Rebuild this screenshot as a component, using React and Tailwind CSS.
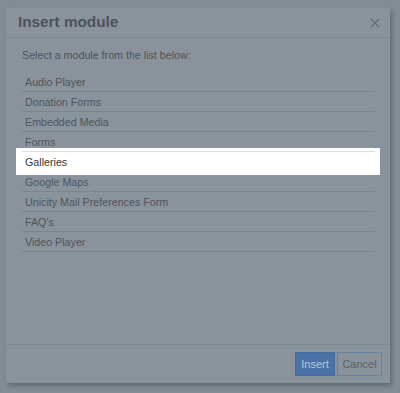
import React from 'react'

const MODULES = [
  'Audio Player',
  'Donation Forms',
  'Embedded Media',
  'Forms',
  'Galleries',
  'Google Maps',
  'Unicity Mail Preferences Form',
  "FAQ's",
  'Video Player',
]

const FONT = { fontFamily: '"Liberation Sans", Arial, sans-serif' }

export default function App() {
  return (
    <div className="w-[400px] h-[393px] bg-[#838b94] overflow-hidden pt-[8px] pl-[6px]" style={FONT}>
      {/* Dimmed modal */}
      <div className="w-[384px] h-[375px] bg-[#8a929b] flex flex-col shadow-[2px_3px_4px_rgba(60,66,74,0.45)]">
        {/* Header */}
        <div className="h-[30px] flex items-center justify-between pl-[12px] pr-[10px] border-b border-[#7f8790]">
          <h1 className="text-[15.3px] font-bold text-[#4c535b]">Insert module</h1>
          <svg width="10" height="10" viewBox="0 0 10 10" className="text-[#656c74]">
            <path d="M1 1L9 9M9 1L1 9" stroke="currentColor" strokeWidth="1.4" />
          </svg>
        </div>

        {/* Body */}
        <div className="flex-1 pl-[16px] pr-[15px] pt-[11px]">
          <p className="text-[10.7px] leading-[12px] text-[#4d545c]">Select a module from the list below:</p>
          <ul className="mt-[11px]">
            {MODULES.map((m) =>
              m === 'Galleries' ? (
                <li key={m} className="relative h-[20px] border-b border-[#dcdcdc]">
                  <span className="absolute -top-[4px] -bottom-[4px] -left-[6px] -right-[5px] bg-white" />
                  <span className="absolute -top-px left-0 right-0 h-px bg-[#dcdcdc]" />
                  <span className="relative block pl-[3px] pt-px leading-[18px] text-[10.7px] text-[#333333]">{m}</span>
                </li>
              ) : (
                <li key={m} className="h-[20px] border-b border-[#7c848d] pl-[3px] pt-px leading-[18px] text-[10.7px] text-[#4f565e]">
                  {m}
                </li>
              )
            )}
          </ul>
        </div>

        {/* Footer */}
        <div className="border-t border-[#7f8790] pt-[7px] pb-[7px] pr-[8px] flex justify-end gap-[2px]">
          <button className="h-[24px] w-[40px] bg-[#4a72a6] text-[#bcc7d4] text-[11px] border border-[#456c9e]">Insert</button>
          <button className="h-[24px] w-[45px] bg-[#8a929b] text-[#5a6169] text-[11px] border border-[#6583a8]">Cancel</button>
        </div>
      </div>
    </div>
  )
}
